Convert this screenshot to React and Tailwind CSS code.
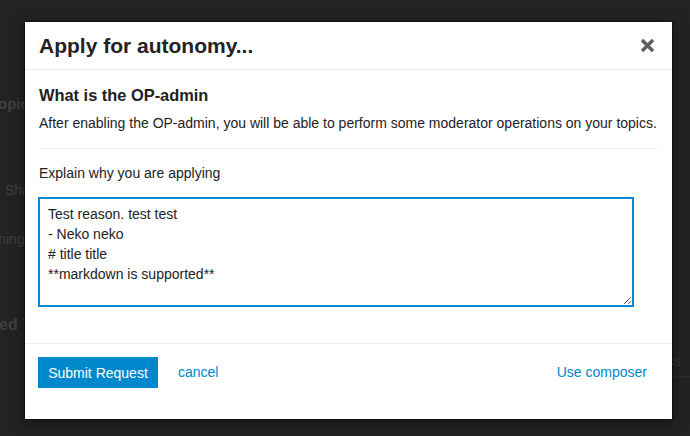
import React from "react";

function CloseIcon() {
  return (
    <svg width="15" height="15" viewBox="0 0 15 15" className="block">
      <path d="M2 2 L13 13 M13 2 L2 13" stroke="#5f5f5f" strokeWidth="3.4" strokeLinecap="butt" />
    </svg>
  );
}

export default function App() {
  return (
    <div className="relative w-[690px] h-[436px] overflow-hidden bg-[#232323] font-['Liberation_Sans',Arial,sans-serif]">
      {/* underlying page, dimmed */}
      <div className="absolute left-[-10px] top-[94px] text-[15px] font-bold text-[#414141] leading-[20px] whitespace-nowrap">Topics</div>
      <div className="absolute left-[5px] top-[180px] text-[14px] text-[#414141] leading-[20px] whitespace-nowrap">Share</div>
      <div className="absolute left-[-27px] top-[229px] text-[14px] text-[#414141] leading-[20px] whitespace-nowrap">Warning</div>
      <div className="absolute left-[-64px] top-[315px] text-[16px] font-bold text-[#414141] leading-[20px] whitespace-nowrap">Suggested Topics</div>
      <div className="absolute left-[667px] top-[351px] text-[14px] text-[#3a3a3a] leading-[20px] whitespace-nowrap">ss</div>
      <div className="absolute left-[672px] top-[376px] w-[18px] h-px bg-[#2c2c2c]"></div>

      {/* modal */}
      <div className="absolute left-[25px] top-[22px] w-[647px] h-[397px] bg-white flex flex-col text-[#222] shadow-[0_0_0_1px_rgba(0,0,0,0.35),0_4px_14px_rgba(0,0,0,0.5)]">
        <div className="h-[48px] shrink-0 flex items-center justify-between pl-[14px] pr-[17px] border-b border-[#e9e9e9]">
          <h3 className="text-[21px] font-bold leading-[24px]">Apply for autonomy...</h3>
          <CloseIcon />
        </div>

        <div className="px-[14px] pt-[15px] flex flex-col">
          <h4 className="text-[16.4px] font-bold leading-[20px]">What is the OP-admin</h4>
          <p className="mt-[8px] text-[14px] leading-[20px] whitespace-nowrap">
            After enabling the OP-admin, you will be able to perform some moderator operations on your topics.
          </p>
          <div className="mt-[15px] h-px bg-[#eeeeee]"></div>
          <label className="mt-[14px] text-[14px] leading-[20px]">Explain why you are applying</label>
          <textarea
            className="mt-[14px] ml-[-1px] w-[596px] h-[110px] border-2 border-[#0a88d0] px-[8px] pt-[5px] pb-[2px] text-[14px] leading-[20px] text-[#222] outline-none font-['Liberation_Sans',Arial,sans-serif] resize"
            defaultValue={"Test reason. test test\n- Neko neko\n# title title\n**markdown is supported**"}
          />
        </div>

        <div className="mt-[36px] border-t border-[#eeeeee] flex items-center pl-[13px] pr-[25px] pt-[13px]">
          <button className="h-[31px] w-[120px] bg-[#0088cc] text-white text-[14px] leading-[20px]">Submit Request</button>
          <span className="ml-[20px] text-[14px] text-[#0088cc]">cancel</span>
          <span className="ml-auto text-[14px] text-[#0088cc]">Use composer</span>
        </div>
      </div>
    </div>
  );
}
